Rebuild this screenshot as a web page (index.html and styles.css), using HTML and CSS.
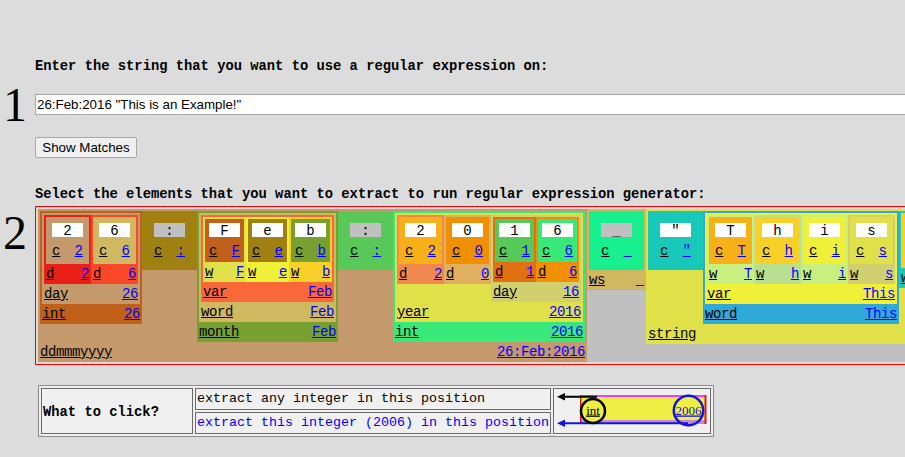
FILE: index.html
```html
<!DOCTYPE html>
<html lang="en">
<head>
<meta charset="utf-8">
<title>Regular expression generator</title>
<link rel="stylesheet" href="styles.css">
</head>
<body>
<main class="page">
  <p class="prompt prompt-1">Enter the string that you want to use a regular expression on:</p>
  <div class="step step-1">
    <div class="num">1</div>
    <input class="text-in" type="text" value="26:Feb:2016 &quot;This is an Example!&quot;">
  </div>
  <button class="btn" type="button">Show Matches</button>
  <p class="prompt prompt-2">Select the elements that you want to extract to run regular expression generator:</p>
  <div class="step step-2">
    <div class="num">2</div>
    <div class="canvas">
      <div class="canvas-row">

        <div class="g c-tan">
          <div class="kids">
            <div class="g c-rust">
              <div class="kids">
                <div class="g c-tan">
                  <div class="kids">
                    <div class="g c-red">
                      <div class="kids">
                        <div class="ch k3 c-tan"><div class="box">2</div><div class="crow"><a class="nm" href="#">c</a><a class="vl" href="#">2</a></div></div>
                      </div>
                      <div class="lbl"><a class="nm" href="#">d</a><a class="vl" href="#">2</a></div>
                    </div>
                    <div class="g c-vermil">
                      <div class="kids">
                        <div class="ch k3 c-sand"><div class="box">6</div><div class="crow"><a class="nm" href="#">c</a><a class="vl" href="#">6</a></div></div>
                      </div>
                      <div class="lbl"><a class="nm" href="#">d</a><a class="vl" href="#">6</a></div>
                    </div>
                  </div>
                  <div class="lbl"><a class="nm" href="#">day</a><a class="vl" href="#">26</a></div>
                </div>
              </div>
              <div class="lbl"><a class="nm" href="#">int</a><a class="vl" href="#">26</a></div>
            </div>

            <div class="ch k0 c-olive"><div class="box box-grey">:</div><div class="crow"><a class="nm" href="#">c</a><a class="vl" href="#">:</a></div></div>

            <div class="g c-moss">
              <div class="kids">
                <div class="g c-sand">
                  <div class="kids">
                    <div class="g c-coral">
                      <div class="kids">
                        <div class="g c-lemon">
                          <div class="kids">
                            <div class="ch k4 c-rust"><div class="box">F</div><div class="crow"><a class="nm" href="#">c</a><a class="vl" href="#">F</a></div></div>
                          </div>
                          <div class="lbl"><a class="nm" href="#">w</a><a class="vl" href="#">F</a></div>
                        </div>
                        <div class="g c-yellow">
                          <div class="kids">
                            <div class="ch k4 c-olive"><div class="box">e</div><div class="crow"><a class="nm" href="#">c</a><a class="vl" href="#">e</a></div></div>
                          </div>
                          <div class="lbl"><a class="nm" href="#">w</a><a class="vl" href="#">e</a></div>
                        </div>
                        <div class="g c-gold">
                          <div class="kids">
                            <div class="ch k4 c-moss"><div class="box">b</div><div class="crow"><a class="nm" href="#">c</a><a class="vl" href="#">b</a></div></div>
                          </div>
                          <div class="lbl"><a class="nm" href="#">w</a><a class="vl" href="#">b</a></div>
                        </div>
                      </div>
                      <div class="lbl"><a class="nm" href="#">var</a><a class="vl" href="#">Feb</a></div>
                    </div>
                  </div>
                  <div class="lbl"><a class="nm" href="#">word</a><a class="vl" href="#">Feb</a></div>
                </div>
              </div>
              <div class="lbl"><a class="nm" href="#">month</a><a class="vl" href="#">Feb</a></div>
            </div>

            <div class="ch k0 c-green"><div class="box box-grey">:</div><div class="crow"><a class="nm" href="#">c</a><a class="vl" href="#">:</a></div></div>

            <div class="g c-mint">
              <div class="kids">
                <div class="g c-lemon">
                  <div class="kids">
                    <div class="g c-peach">
                      <div class="kids">
                        <div class="ch k3 c-amber"><div class="box">2</div><div class="crow"><a class="nm" href="#">c</a><a class="vl" href="#">2</a></div></div>
                      </div>
                      <div class="lbl"><a class="nm" href="#">d</a><a class="vl" href="#">2</a></div>
                    </div>
                    <div class="g c-apricot">
                      <div class="kids">
                        <div class="ch k3 c-orange"><div class="box">0</div><div class="crow"><a class="nm" href="#">c</a><a class="vl" href="#">0</a></div></div>
                      </div>
                      <div class="lbl"><a class="nm" href="#">d</a><a class="vl" href="#">0</a></div>
                    </div>
                    <div class="g c-khaki">
                      <div class="kids">
                        <div class="g c-burnt">
                          <div class="kids">
                            <div class="ch k4 c-green"><div class="box">1</div><div class="crow"><a class="nm" href="#">c</a><a class="vl" href="#">1</a></div></div>
                          </div>
                          <div class="lbl"><a class="nm" href="#">d</a><a class="vl" href="#">1</a></div>
                        </div>
                        <div class="g c-orange">
                          <div class="kids">
                            <div class="ch k4 c-mint"><div class="box">6</div><div class="crow"><a class="nm" href="#">c</a><a class="vl" href="#">6</a></div></div>
                          </div>
                          <div class="lbl"><a class="nm" href="#">d</a><a class="vl" href="#">6</a></div>
                        </div>
                      </div>
                      <div class="lbl"><a class="nm" href="#">day</a><a class="vl" href="#">16</a></div>
                    </div>
                  </div>
                  <div class="lbl"><a class="nm" href="#">year</a><a class="vl" href="#">2016</a></div>
                </div>
              </div>
              <div class="lbl"><a class="nm" href="#">int</a><a class="vl" href="#">2016</a></div>
            </div>
          </div>
          <div class="lbl"><a class="nm" href="#">ddmmmyyyy</a><a class="vl" href="#">26:Feb:2016</a></div>
        </div>

        <div class="g c-sand">
          <div class="kids">
            <div class="ch k0 c-spring"><div class="box box-grey">_</div><div class="crow"><a class="nm" href="#">c</a><a class="vl" href="#">&nbsp;</a></div></div>
          </div>
          <div class="lbl"><a class="nm" href="#">ws</a><a class="vl" href="#">&nbsp;</a></div>
        </div>

        <div class="g c-lemon">
          <div class="kids">
            <div class="ch k0 c-teal"><div class="box">&quot;</div><div class="crow"><a class="nm" href="#">c</a><a class="vl" href="#">&quot;</a></div></div>
            <div class="g c-sky">
              <div class="kids">
                <div class="g c-yellow">
                  <div class="kids">
                    <div class="g c-lime">
                      <div class="kids">
                        <div class="ch k3 c-amber"><div class="box">T</div><div class="crow"><a class="nm" href="#">c</a><a class="vl" href="#">T</a></div></div>
                      </div>
                      <div class="lbl"><a class="nm" href="#">w</a><a class="vl" href="#">T</a></div>
                    </div>
                    <div class="g c-sage">
                      <div class="kids">
                        <div class="ch k3 c-gold"><div class="box">h</div><div class="crow"><a class="nm" href="#">c</a><a class="vl" href="#">h</a></div></div>
                      </div>
                      <div class="lbl"><a class="nm" href="#">w</a><a class="vl" href="#">h</a></div>
                    </div>
                    <div class="g c-lime">
                      <div class="kids">
                        <div class="ch k3 c-yellow"><div class="box">i</div><div class="crow"><a class="nm" href="#">c</a><a class="vl" href="#">i</a></div></div>
                      </div>
                      <div class="lbl"><a class="nm" href="#">w</a><a class="vl" href="#">i</a></div>
                    </div>
                    <div class="g c-khaki">
                      <div class="kids">
                        <div class="ch k3 c-lemon"><div class="box">s</div><div class="crow"><a class="nm" href="#">c</a><a class="vl" href="#">s</a></div></div>
                      </div>
                      <div class="lbl"><a class="nm" href="#">w</a><a class="vl" href="#">s</a></div>
                    </div>
                  </div>
                  <div class="lbl"><a class="nm" href="#">var</a><a class="vl" href="#">This</a></div>
                </div>
              </div>
              <div class="lbl"><a class="nm" href="#">word</a><a class="vl" href="#">This</a></div>
            </div>
            <div class="g c-teal">
              <div class="kids">
                <div class="ch k1 c-gold"><div class="box box-grey">_</div><div class="crow"><a class="nm" href="#">c</a><a class="vl" href="#">&nbsp;</a></div></div>
              </div>
              <div class="lbl"><a class="nm" href="#">ws</a><a class="vl" href="#">&nbsp;</a></div>
            </div>
            <div class="g c-sky">
              <div class="kids">
                <div class="g c-yellow">
                  <div class="kids">
                    <div class="g c-lime">
                      <div class="kids">
                        <div class="ch k3 c-amber"><div class="box">i</div><div class="crow"><a class="nm" href="#">c</a><a class="vl" href="#">i</a></div></div>
                      </div>
                      <div class="lbl"><a class="nm" href="#">w</a><a class="vl" href="#">i</a></div>
                    </div>
                    <div class="g c-sage">
                      <div class="kids">
                        <div class="ch k3 c-gold"><div class="box">s</div><div class="crow"><a class="nm" href="#">c</a><a class="vl" href="#">s</a></div></div>
                      </div>
                      <div class="lbl"><a class="nm" href="#">w</a><a class="vl" href="#">s</a></div>
                    </div>
                  </div>
                  <div class="lbl"><a class="nm" href="#">var</a><a class="vl" href="#">is</a></div>
                </div>
              </div>
              <div class="lbl"><a class="nm" href="#">word</a><a class="vl" href="#">is</a></div>
            </div>
            <div class="g c-teal">
              <div class="kids">
                <div class="ch k1 c-gold"><div class="box box-grey">_</div><div class="crow"><a class="nm" href="#">c</a><a class="vl" href="#">&nbsp;</a></div></div>
              </div>
              <div class="lbl"><a class="nm" href="#">ws</a><a class="vl" href="#">&nbsp;</a></div>
            </div>
            <div class="g c-sky">
              <div class="kids">
                <div class="g c-yellow">
                  <div class="kids">
                    <div class="g c-lime">
                      <div class="kids">
                        <div class="ch k3 c-amber"><div class="box">a</div><div class="crow"><a class="nm" href="#">c</a><a class="vl" href="#">a</a></div></div>
                      </div>
                      <div class="lbl"><a class="nm" href="#">w</a><a class="vl" href="#">a</a></div>
                    </div>
                    <div class="g c-sage">
                      <div class="kids">
                        <div class="ch k3 c-gold"><div class="box">n</div><div class="crow"><a class="nm" href="#">c</a><a class="vl" href="#">n</a></div></div>
                      </div>
                      <div class="lbl"><a class="nm" href="#">w</a><a class="vl" href="#">n</a></div>
                    </div>
                  </div>
                  <div class="lbl"><a class="nm" href="#">var</a><a class="vl" href="#">an</a></div>
                </div>
              </div>
              <div class="lbl"><a class="nm" href="#">word</a><a class="vl" href="#">an</a></div>
            </div>
          </div>
          <div class="lbl"><a class="nm" href="#">string</a><a class="vl" href="#">&quot;This is an Example!&quot;</a></div>
        </div>

      </div>
    </div>
  </div>

  <table class="help">
    <tr>
      <td class="help-title" rowspan="2">What to click?</td>
      <td class="help-any">extract any integer in this position</td>
      <td class="help-pic" rowspan="2">
        <svg class="help-svg" width="156" height="44" viewBox="0 0 156 44" aria-hidden="true">
          <rect x="26" y="6" width="126" height="29" fill="#eeee44"/>
          <rect x="26" y="6" width="126" height="2" fill="#f040f0"/>
          <rect x="26" y="31" width="126" height="4" fill="#c488d8"/>
          <rect x="26" y="6" width="1.5" height="29" fill="#e01818"/>
          <rect x="150.5" y="6" width="2" height="29" fill="#e01818"/>
          <line x1="10" y1="7.7" x2="43" y2="7.7" stroke="#000" stroke-width="2"/>
          <polygon points="3,7.7 11,4 11,11.4" fill="#000"/>
          <line x1="10" y1="34.3" x2="134" y2="34.3" stroke="#1414d8" stroke-width="2"/>
          <polygon points="3,34.3 11,30.6 11,38" fill="#1414d8"/>
          <circle cx="39" cy="22" r="12" fill="#eeee44" stroke="#000" stroke-width="2.5"/>
          <circle cx="134.5" cy="21.5" r="14.7" fill="none" stroke="#1414d8" stroke-width="2.5"/>
          <text x="39" y="25.5" class="svg-int" text-anchor="middle">int</text>
          <text x="134.5" y="25.5" class="svg-num" text-anchor="middle">2006</text>
        </svg>
      </td>
    </tr>
    <tr>
      <td class="help-this">extract this integer (2006) in this position</td>
    </tr>
  </table>
</main>
</body>
</html>
```
FILE: styles.css
```css
html, body {
  margin: 0;
  overflow: hidden;
  background: #dcdcdc;
}

body {
  width: 905px;
  height: 457px;
  font-family: "Liberation Mono", monospace;
  color: #000;
}

.page {
  padding-top: 57px;
}

.prompt {
  margin: 0 0 0 35px;
  font: bold 13.8px/20px "Liberation Mono", monospace;
  white-space: nowrap;
}

.prompt-2 {
  margin-top: 27px;
}

.step {
  display: flex;
}

.step-1 {
  align-items: center;
  margin-top: 1px;
}

.step-2 {
  align-items: flex-start;
  margin-top: 1px;
}

.num {
  flex: none;
  width: 35px;
  height: 53px;
  box-sizing: border-box;
  padding-left: 3px;
  font: 48px/53px "Liberation Serif", serif;
}

.text-in {
  flex: none;
  width: 1000px;
  height: 21px;
  box-sizing: border-box;
  margin: 0;
  padding: 1px 1px;
  border: 1px solid #a6a6a6;
  background: #fff;
  font: 13.33px "Liberation Sans", Arial, sans-serif;
  color: #000;
}

.btn {
  display: block;
  margin: 6px 0 0 35px;
  width: 102px;
  height: 21px;
  padding: 0;
  border: 1px solid #a9a9a9;
  border-radius: 2px;
  background: #f0f0f0;
  font: 13.33px "Liberation Sans", Arial, sans-serif;
  color: #000;
}

/* ---------- element canvas ---------- */
.canvas {
  flex: none;
  border: 1px solid #ff0000;
  padding: 2px;
}

.canvas-row {
  display: flex;
  align-items: flex-start;
  width: max-content;
  background: #c0c0c0;
}

.g {
  flex: none;
  display: flex;
  flex-direction: column;
  padding: 2px 2px 0;
}

.kids {
  display: flex;
  align-items: flex-start;
}

.lbl {
  display: flex;
  justify-content: space-between;
  height: 20px;
  font-size: 14px;
  letter-spacing: -0.4px;
  line-height: 20px;
  white-space: nowrap;
}

.ch {
  flex: none;
  display: flex;
  flex-direction: column;
}

.k0 { padding: 12px 12px 9px; }
.k1 { padding: 10px 10px 7px; }
.k3 { padding: 6px 6px 3px; }
.k4 { padding: 4px 4px 1px; }

.box {
  width: 31px;
  height: 14px;
  margin-bottom: 4px;
  background: #fff;
  text-align: center;
  font-size: 14px;
  line-height: 16px;
  white-space: pre;
}

.box-grey {
  background: #c0c0c0;
}

.crow {
  display: flex;
  justify-content: space-between;
  width: 31px;
  height: 20px;
  font-size: 14px;
  line-height: 20px;
}

a.nm {
  color: #000;
  text-decoration: underline;
}

a.vl {
  color: #0000ff;
  text-decoration: underline;
}

.c-tan { background: #c49a6c; }
.c-rust { background: #c0601a; }
.c-red { background: #e82018; }
.c-vermil { background: #f84828; }
.c-sand { background: #d0b860; }
.c-olive { background: #a08010; }
.c-moss { background: #78a030; }
.c-lemon { background: #e0e048; }
.c-yellow { background: #f0f038; }
.c-gold { background: #f8d028; }
.c-coral { background: #f86838; }
.c-green { background: #58c858; }
.c-mint { background: #38e878; }
.c-peach { background: #f08850; }
.c-amber { background: #f8b018; }
.c-orange { background: #f09000; }
.c-apricot { background: #e0b060; }
.c-burnt { background: #e07010; }
.c-khaki { background: #d0d070; }
.c-spring { background: #18f090; }
.c-teal { background: #18c8b8; }
.c-sky { background: #30a8d8; }
.c-lime { background: #c8f080; }
.c-sage { background: #b8e090; }

/* ---------- help table ---------- */
.help {
  margin: 20px 0 0 38px;
  border: 1px solid #8a8a8a;
  border-spacing: 2px;
  background: #f0f0f0;
  font: 13.33px/18px "Liberation Mono", monospace;
}

.help td {
  border: 1px solid #6a6a6a;
  padding: 1px;
  white-space: nowrap;
  background: #f0f0f0;
}

.help .help-title {
  width: 148px;
  padding-top: 4px;
  font-weight: bold;
  font-size: 13.8px;
}

.help .help-this {
  color: #0000ff;
}

.help .help-pic {
  padding: 0;
  width: 156px;
  line-height: 0;
}

.help-svg {
  display: block;
}

.svg-int {
  font: 13px "Liberation Serif", serif;
  fill: #000;
  text-decoration: underline;
}

.svg-num {
  font: 13px "Liberation Serif", serif;
  fill: #1414d8;
  text-decoration: underline;
}
```
